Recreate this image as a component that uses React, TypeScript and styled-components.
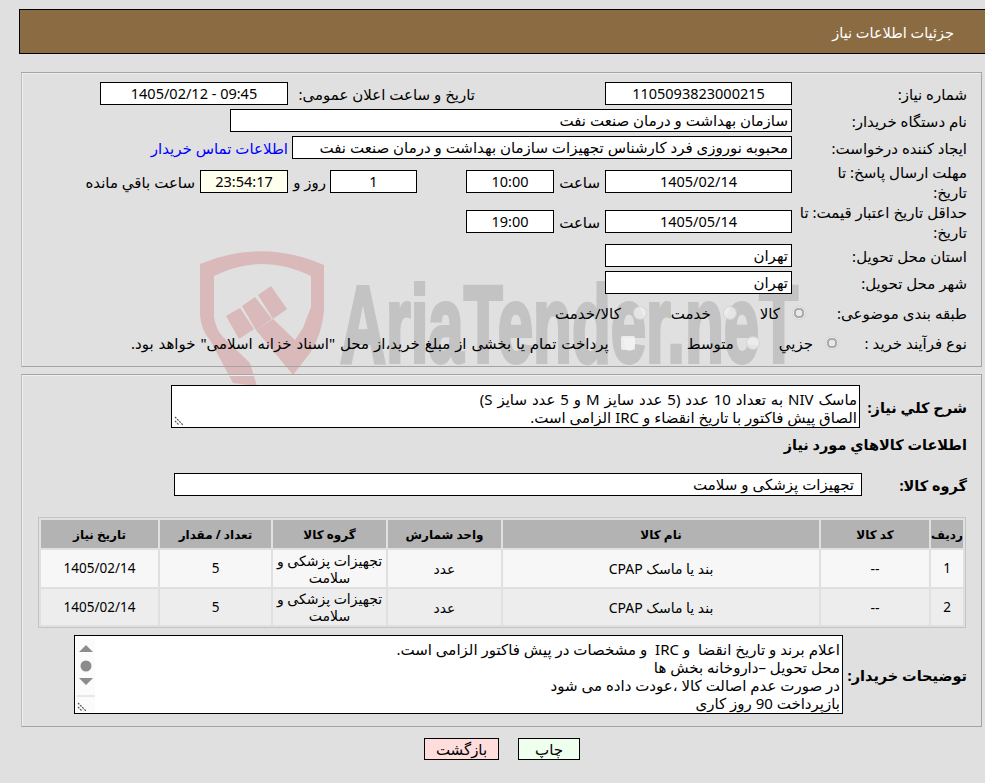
import styled, { createGlobalStyle } from "styled-components";

// ─── Styled Components ────────────────────────────────────────────────────────

const GlobalStyle = createGlobalStyle`
  html, body {
    margin: 0;
    padding: 0;
    background: #e0e0e0;
  }
  body {
    font-family: "Noto Sans", "DejaVu Sans", sans-serif;
    font-size: 15px;
    color: #000;
    overflow: hidden;
  }
`;

const Page = styled.div`
  position: relative;
  width: 985px;
  height: 783px;
  overflow: hidden;
  direction: rtl;
  padding-top: 9px;
  box-sizing: border-box;
`;

const Watermark = styled.svg`
  position: absolute;
  top: 0;
  left: 0;
`;

const Header = styled.div`
  position: relative;
  box-sizing: border-box;
  height: 45px;
  margin-left: 19px;
  padding-right: 31px;
  background: #8b6c42;
  border: 1px solid #000;
  border-right: none;
  color: #fff;
  font-size: 14.5px;
  display: flex;
  align-items: center;
`;

const Panel = styled.div<{ $top: number; $height: number }>`
  position: relative;
  z-index: 1;
  box-sizing: border-box;
  width: 961px;
  height: ${(p) => p.$height}px;
  margin: ${(p) => p.$top}px 3px 0 0;
  border: 1px solid #a4a4a4;
  border-left-color: #bdbdbd;
  box-shadow: inset 1px 1px 0 #eee;
  padding-right: 14px;
`;

const Row = styled.div<{ $height?: number; $top?: number }>`
  display: flex;
  align-items: center;
  height: ${(p) => p.$height ?? 23}px;
  margin-top: ${(p) => p.$top ?? 4}px;
`;

const Label = styled.div<{ $width?: number; $bold?: boolean }>`
  flex-shrink: 0;
  width: ${(p) => p.$width ?? 175}px;
  box-sizing: border-box;
  line-height: 20px;
  white-space: nowrap;
  font-size: ${(p) => (p.$bold ? 14.5 : 15)}px;
  font-weight: ${(p) => (p.$bold ? 700 : 400)};
`;

const Caption = styled.div<{ $width: number; $before?: number }>`
  flex-shrink: 0;
  width: ${(p) => p.$width}px;
  margin-right: ${(p) => p.$before ?? 0}px;
  white-space: nowrap;
`;

const Field = styled.div<{
  $width: number;
  $center?: boolean;
  $before?: number;
  $tint?: boolean;
  $inset?: number;
}>`
  flex-shrink: 0;
  box-sizing: border-box;
  width: ${(p) => p.$width}px;
  height: 23px;
  margin-right: ${(p) => p.$before ?? 0}px;
  padding: 0 ${(p) => p.$inset ?? 3}px 0 3px;
  background: ${(p) => (p.$tint ? "#ffffee" : "#fff")};
  border: 1px solid #000;
  font-size: ${(p) => (p.$center ? 14.5 : 15)}px;
  line-height: 21px;
  white-space: nowrap;
  text-align: ${(p) => (p.$center ? "center" : "right")};
`;

const ContactLink = styled.a`
  margin-right: 4px;
  color: #0000ff;
  white-space: nowrap;
  text-decoration: none;
`;

const Option = styled.div<{ $after: number; $loose?: boolean }>`
  display: flex;
  align-items: center;
  gap: 12px;
  margin-left: ${(p) => p.$after}px;
  white-space: nowrap;
  word-spacing: ${(p) => (p.$loose ? 1 : 0)}px;
`;

const Radio = styled.span<{ $checked?: boolean }>`
  flex-shrink: 0;
  box-sizing: border-box;
  width: 14px;
  height: 14px;
  border-radius: 50%;
  border: 1px solid rgba(190, 190, 190, 0.5);
  background: ${(p) =>
    p.$checked
      ? "radial-gradient(circle, #e8e8e8 0 3px, #ababab 3.5px 5px, #efefef 5.5px)"
      : "rgba(240, 240, 240, 0.75)"};
`;

const CheckBox = styled.span`
  flex-shrink: 0;
  box-sizing: border-box;
  width: 14px;
  height: 14px;
  border-radius: 2px;
  background: rgba(243, 243, 243, 0.85);
`;

const TextBox = styled.div<{ $width: number; $height: number }>`
  position: relative;
  flex-shrink: 0;
  box-sizing: border-box;
  width: ${(p) => p.$width}px;
  height: ${(p) => p.$height}px;
  padding: 4px 2px 0 0;
  background: #fff;
  border: 1px solid #000;
  line-height: 18px;
  white-space: pre;
`;

const TextLine = styled.div<{ $loose?: boolean }>`
  word-spacing: ${(p) => (p.$loose ? 1 : 0)}px;
`;

const ScrollBar = styled.div`
  position: absolute;
  left: 1px;
  top: 1px;
  bottom: 1px;
  width: 19px;
  background: #fbfbfb;
`;

const Grip = styled.svg`
  position: absolute;
  left: 1px;
  bottom: 1px;
`;

const SectionTitle = styled.div`
  margin-top: 6px;
  height: 20px;
  line-height: 20px;
  font-weight: 700;
  font-size: 14.5px;
`;

const ItemsTable = styled.table`
  width: 928px;
  margin: 21px 1px 0 0;
  border: 1px solid #c4c4c4;
  border-spacing: 2px;
  table-layout: fixed;
  font-size: 14px;
`;

const HeadCell = styled.th`
  height: 28px;
  padding: 0;
  background: #b3b3b3;
  font-weight: 700;
  font-size: 12px;
  text-align: center;
`;

const BodyRow = styled.tr<{ $alt?: boolean }>`
  height: ${(p) => (p.$alt ? 36 : 37)}px;
  background: ${(p) => (p.$alt ? "#ededed" : "#f7f7f7")};
`;

const BodyCell = styled.td<{ $numeric?: boolean }>`
  padding: 0;
  text-align: center;
  line-height: 17px;
  font-size: ${(p) => (p.$numeric ? 13.5 : 14)}px;
`;

const Actions = styled.div`
  display: flex;
  gap: 19px;
  margin: 11px 405px 0 0;
`;

const ActionButton = styled.button<{ $bg: string; $width: number }>`
  box-sizing: border-box;
  width: ${(p) => p.$width}px;
  height: 22px;
  padding: 0;
  background: ${(p) => p.$bg};
  border: 1px solid #000;
  border-radius: 0;
  font: inherit;
  color: #000;
`;

// ─── Data ─────────────────────────────────────────────────────────────────────

const COLUMNS = [
  { title: "ردیف", width: 32 },
  { title: "کد کالا", width: 108 },
  { title: "نام کالا", width: 316 },
  { title: "واحد شمارش", width: 113 },
  { title: "گروه کالا", width: 113 },
  { title: "تعداد / مقدار", width: 111 },
  { title: "تاریخ نیاز", width: 117 },
];

const ITEMS = [
  { row: "1", code: "--", name: "بند یا ماسک CPAP", unit: "عدد", group: "تجهیزات پزشکی و سلامت", count: "5", date: "1405/02/14" },
  { row: "2", code: "--", name: "بند یا ماسک CPAP", unit: "عدد", group: "تجهیزات پزشکی و سلامت", count: "5", date: "1405/02/14" },
];

const BUYER_NOTES = [
  "اعلام برند و تاریخ انقضا  و IRC  و مشخصات در پیش فاکتور الزامی است.",
  "محل تحویل –داروخانه بخش ها",
  "در صورت عدم اصالت کالا ،عودت داده می شود",
  "بازپرداخت 90 روز کاری",
];

// ─── Component ────────────────────────────────────────────────────────────────

function ResizeGrip() {
  return (
    <Grip width="12" height="12" viewBox="0 0 12 12">
      <path d="M2 3 L10 11 M2 7 L6 11" stroke="#555" strokeWidth="1.2" strokeDasharray="2 1" fill="none" />
    </Grip>
  );
}

export default function App() {
  return (
    <Page>
      <GlobalStyle />
      <Watermark width="985" height="400" viewBox="0 0 985 400">
        <path
          d="M200 264 Q262 238 324 265 L324 310 Q322 335 310 353 L293 375 L256 330 L273 319 L295 340 L303 328 L311 307 L311 276 Q262 252 214 276 L214 317 Q216 330 223 337 L250 363 L257 386 L233 383 L210 340 Q201 330 200 315 Z"
          fill="#d9b9b9"
        />
        <path d="M226 316 L240 308 L254 329 L239 339 Z M242 306 L255 297 L272 319 L256 330 Z M258 295 L271 286 L287 309 L273 319 Z" fill="#d9b9b9" />
        <text
          x="340"
          y="362"
          direction="ltr"
          textAnchor="start"
          textLength="458"
          lengthAdjust="spacingAndGlyphs"
          fontFamily="Liberation Sans, sans-serif"
          fontWeight="700"
          fontSize="110"
          fill="#c3c3c3"
          stroke="#c3c3c3"
          strokeWidth="4"
          style={{ unicodeBidi: "plaintext" }}
        >
          AriaTender.neT
        </text>
      </Watermark>

      <Header>جزئیات اطلاعات نیاز</Header>

      <Panel $top={18} $height={295}>
        <Row $top={9}>
          <Label>شماره نیاز:</Label>
          <Field $width={187} $center>1105093823000215</Field>
          <Caption $width={187} $before={130}>تاریخ و ساعت اعلان عمومی:</Caption>
          <Field $width={188} $center>09:45 - 1405/02/12</Field>
        </Row>
        <Row>
          <Label>نام دستگاه خریدار:</Label>
          <Field $width={562}>سازمان بهداشت و درمان صنعت نفت</Field>
        </Row>
        <Row>
          <Label>ایجاد کننده درخواست:</Label>
          <Field $width={500}>محبوبه نوروزی فرد کارشناس تجهیزات سازمان بهداشت و درمان صنعت نفت</Field>
          <ContactLink href="#">اطلاعات تماس خریدار</ContactLink>
        </Row>
        <Row $top={11}>
          <Label>مهلت ارسال پاسخ: تا<br />تاریخ:</Label>
          <Field $width={187} $center>1405/02/14</Field>
          <Caption $width={46} $before={5}>ساعت</Caption>
          <Field $width={88} $center>10:00</Field>
          <Field $width={87} $center $before={49}>1</Field>
          <Caption $width={38} $before={4}>روز و</Caption>
          <Field $width={88} $center $tint>23:54:17</Field>
          <Caption $width={110} $before={5}>ساعت باقي مانده</Caption>
        </Row>
        <Row $top={17}>
          <Label>حداقل تاریخ اعتبار قیمت: تا<br />تاریخ:</Label>
          <Field $width={187} $center>1405/05/14</Field>
          <Caption $width={46} $before={5}>ساعت</Caption>
          <Field $width={88} $center>19:00</Field>
        </Row>
        <Row $top={11}>
          <Label>استان محل تحویل:</Label>
          <Field $width={187}>تهران</Field>
        </Row>
        <Row>
          <Label>شهر محل تحویل:</Label>
          <Field $width={187}>تهران</Field>
        </Row>
        <Row $top={8} $height={22}>
          <Label $width={161}>طبقه بندی موضوعی:</Label>
          <Option $after={23}><Radio $checked />کالا</Option>
          <Option $after={24}><Radio />خدمت</Option>
          <Option $after={0}><Radio />کالا/خدمت</Option>
        </Row>
        <Row $top={8} $height={22}>
          <Label $width={128}>نوع فرآیند خرید :</Label>
          <Option $after={19}><Radio $checked />جزيي</Option>
          <Option $after={52}><Radio />متوسط</Option>
          <Option $after={0} $loose><CheckBox />پرداخت تمام یا بخشی از مبلغ خرید،از محل "اسناد خزانه اسلامی" خواهد بود.</Option>
        </Row>
      </Panel>

      <Panel $top={7} $height={353}>
        <Row $top={10} $height={43}>
          <Label $width={107} $bold>شرح کلي نیاز:</Label>
          <TextBox $width={689} $height={43}>
            <TextLine $loose>ماسک NIV به تعداد 10 عدد (5 عدد سایز M و 5 عدد سایز S)</TextLine>
            <TextLine>الصاق پیش فاکتور با تاریخ انقضاء و IRC الزامی است.</TextLine>
            <ResizeGrip />
          </TextBox>
        </Row>
        <SectionTitle>اطلاعات کالاهاي مورد نیاز</SectionTitle>
        <Row $top={19}>
          <Label $width={105} $bold>گروه کالا:</Label>
          <Field $width={688} $inset={7}>تجهیزات پزشکی و سلامت</Field>
        </Row>
        <ItemsTable>
          <colgroup>
            {COLUMNS.map((column) => (
              <col key={column.title} width={column.width} />
            ))}
          </colgroup>
          <thead>
            <tr>
              {COLUMNS.map((column) => (
                <HeadCell key={column.title}>{column.title}</HeadCell>
              ))}
            </tr>
          </thead>
          <tbody>
            {ITEMS.map((item, index) => (
              <BodyRow key={item.row} $alt={index % 2 === 1}>
                <BodyCell $numeric>{item.row}</BodyCell>
                <BodyCell>{item.code}</BodyCell>
                <BodyCell>{item.name}</BodyCell>
                <BodyCell>{item.unit}</BodyCell>
                <BodyCell>{item.group}</BodyCell>
                <BodyCell $numeric>{item.count}</BodyCell>
                <BodyCell $numeric>{item.date}</BodyCell>
              </BodyRow>
            ))}
          </tbody>
        </ItemsTable>
        <Row $top={7} $height={79}>
          <Label $width={124} $bold>توضیحات خریدار:</Label>
          <TextBox $width={769} $height={79}>
            {BUYER_NOTES.map((line) => (
              <TextLine key={line}>{line}</TextLine>
            ))}
            <ScrollBar>
              <svg width="19" height="77" viewBox="0 0 19 77">
                <path d="M3 15 L10 8 L17 15 Z M3 41 L17 41 L10 48 Z" fill="#8c8c8c" />
                <circle cx="10" cy="29" r="5.5" fill="#8c8c8c" />
                <path d="M1 59 H19" stroke="#d4d4d4" />
              </svg>
            </ScrollBar>
            <ResizeGrip />
          </TextBox>
        </Row>
      </Panel>

      <Actions>
        <ActionButton $bg="#eeffee" $width={62}>چاپ</ActionButton>
        <ActionButton $bg="#ffdddd" $width={75}>بازگشت</ActionButton>
      </Actions>
    </Page>
  );
}
